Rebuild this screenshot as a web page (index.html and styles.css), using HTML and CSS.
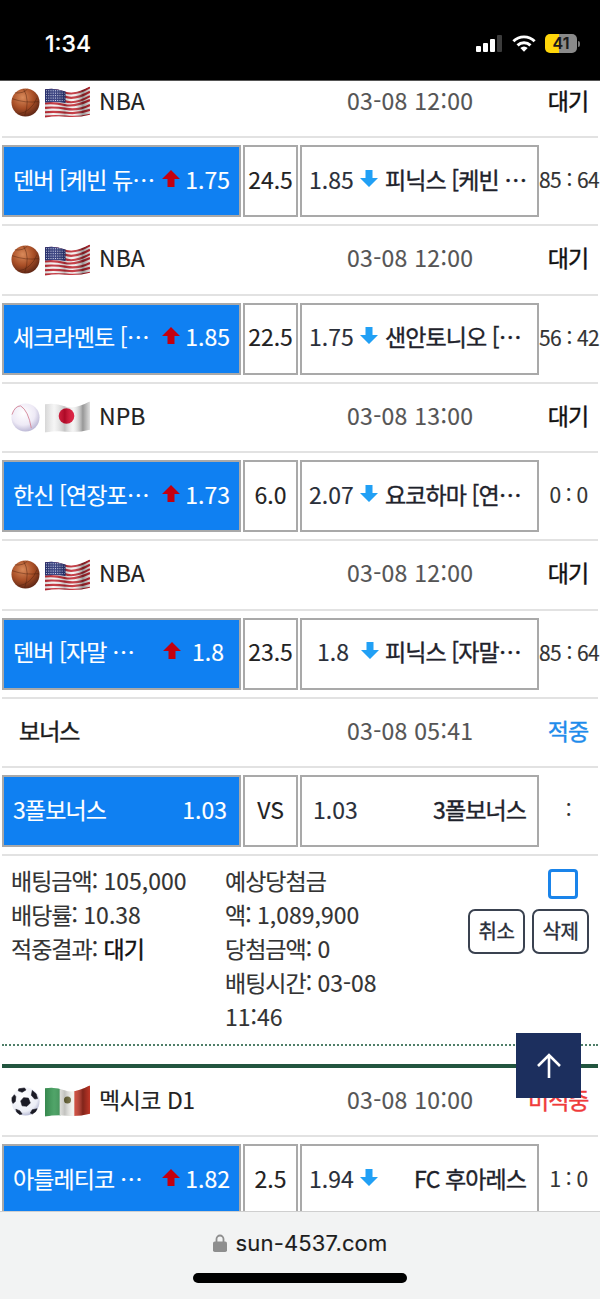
FILE: index.html
```html
<!DOCTYPE html>
<html lang="ko">
<head>
    <meta charset="UTF-8">
    <meta name="viewport" content="width=device-width, initial-scale=1.0">
    <title>sun-4537.com</title>
    <link rel="stylesheet" href="styles.css">
</head>
<body>
    <!-- shared icons -->
    <svg class="svg-defs" aria-hidden="true">
        <defs>
            <radialGradient id="grad-basket" cx="40%" cy="32%" r="72%">
                <stop offset="0" stop-color="#d98a5a"/>
                <stop offset="0.55" stop-color="#a84e26"/>
                <stop offset="1" stop-color="#5a2414"/>
            </radialGradient>
            <radialGradient id="grad-base" cx="42%" cy="35%" r="70%">
                <stop offset="0" stop-color="#ffffff"/>
                <stop offset="0.6" stop-color="#eeeaf6"/>
                <stop offset="1" stop-color="#b4b0d0"/>
            </radialGradient>
            <radialGradient id="grad-soccer" cx="42%" cy="35%" r="72%">
                <stop offset="0" stop-color="#ffffff"/>
                <stop offset="0.7" stop-color="#eceef6"/>
                <stop offset="1" stop-color="#a4a8c8"/>
            </radialGradient>
            <linearGradient id="grad-fold">
                <stop offset="0" stop-color="#000" stop-opacity="0.12"/>
                <stop offset="0.2" stop-color="#fff" stop-opacity="0.1"/>
                <stop offset="0.44" stop-color="#000" stop-opacity="0.2"/>
                <stop offset="0.62" stop-color="#fff" stop-opacity="0.1"/>
                <stop offset="0.84" stop-color="#000" stop-opacity="0.38"/>
                <stop offset="1" stop-color="#000" stop-opacity="0.08"/>
            </linearGradient>
            <clipPath id="flag-wave">
                <path d="M0 3q10-2 20 2t26-5v29q-12 3-24 2t-22 1z"/>
            </clipPath>
            <symbol id="ball-basket" viewBox="0 0 30 30">
                <circle cx="15" cy="15" r="14.5" fill="url(#grad-basket)"/>
                <path d="M1 11q14 5 28 3M13 1q7 12 1 28M4 5q9 1 13-4M7 27q14-2 20-17" fill="none" stroke="#4a1d0c" stroke-width="0.6" stroke-opacity="0.75"/>
            </symbol>
            <symbol id="ball-base" viewBox="0 0 30 30">
                <circle cx="15" cy="15" r="14.5" fill="url(#grad-base)"/>
                <path d="M1 12Q4 3 10 3Q18 8 21 26" fill="none" stroke="#d68c9e" stroke-width="1"/>
            </symbol>
            <symbol id="ball-soccer" viewBox="0 0 30 30">
                <circle cx="15" cy="15" r="14.5" fill="url(#grad-soccer)"/>
                <path d="M13 11l5 .5 2 5-3.500 3.500-5-.5-1.500-5zM8 1.800l6-.8 1.500 2-4 2.500-4-1.500zM22 3.500l4 3.500 1.500 5-3 .5-3.500-4zM1 11l2.500-3 1.500 2-.5 5-2.500 2-1-2.500zM5 23l4 1.500 2.500 3.500-2.500.5-3-2.500zM20 27l2-3.500 5-1-1.500 3-3.500 2.500z" fill="#1a1a24" stroke="#1a1a24" stroke-width="0.6" stroke-linejoin="round"/>
            </symbol>
            <symbol id="flag-us" viewBox="0 0 46 32">
                <g clip-path="url(#flag-wave)">
                    <rect width="46" height="32" fill="#f6f3f3"/>
                    <path d="M0 4q10-2 20 2t26-5M0 8.500q10-2 20 2t26-5M0 13q10-2 20 2t26-5M0 17.500q10-1 20 1.500t26-5M0 22q10-1 22 1t24-4M0 26.500q10-1 22 .5t24-3M0 31q10-1 22 0t24-2" fill="none" stroke="#c22a34" stroke-width="2.200"/>
                    <path d="M0 0h21v17q-10-1.500-21-.5z" fill="#2a3478"/>
                    <path d="M1 4.500h19M1 7h19M1 9.500h19M1 12h19M1 14.500h19" stroke="#dfe2f4" stroke-width="1" stroke-dasharray="1 1.300"/>
                    <rect width="46" height="32" fill="url(#grad-fold)"/>
                </g>
            </symbol>
            <symbol id="flag-jp" viewBox="0 0 46 32">
                <g clip-path="url(#flag-wave)">
                    <rect width="46" height="32" fill="#f4f4f4"/>
                    <circle cx="22" cy="15" r="8" fill="#d80c30"/>
                    <rect width="46" height="32" fill="url(#grad-fold)"/>
                </g>
            </symbol>
            <symbol id="flag-mx" viewBox="0 0 46 32">
                <g clip-path="url(#flag-wave)">
                    <rect width="16" height="32" fill="#3d9a58"/>
                    <rect x="15" width="16" height="32" fill="#f2f2ee"/>
                    <rect x="30" width="16" height="32" fill="#cf3a2a"/>
                    <circle cx="23" cy="15" r="3.600" fill="#6e6a3a"/>
                    <rect width="46" height="32" fill="url(#grad-fold)"/>
                </g>
            </symbol>
            <symbol id="arrow-up" viewBox="0 0 18 18">
                <path d="M9 0l9 9h-5.500v8h-7v-8h-5.500z"/>
            </symbol>
            <symbol id="arrow-down" viewBox="0 0 18 18">
                <path d="M5.500 0h7v8h5.500l-9 9-9-9h5.500z"/>
            </symbol>
        </defs>
    </svg>

    <div class="status-bar">
        <span class="clock">1:34</span>
        <div class="status-icons">
            <svg class="signal" viewBox="0 0 27 17" fill="#fff">
                <rect x="0" y="11" width="5" height="6" rx="1"/>
                <rect x="7" y="8" width="5" height="9" rx="1"/>
                <rect x="14" y="4" width="5" height="13" rx="1"/>
                <rect x="21" y="0" width="5" height="17" rx="1" fill="#3c3c3c"/>
            </svg>
            <svg class="wifi" viewBox="0 0 26 18" fill="none" stroke="#fff" stroke-width="3.200">
                <path d="M1.500 6.500a16.500 16.500 0 0 1 23 0"/>
                <path d="M6 11a10 10 0 0 1 14 0"/>
                <path d="M13 18l-4-4a5.500 5.500 0 0 1 8 0z" fill="#fff" stroke="none"/>
            </svg>
            <div class="battery"><span class="battery-level">41</span></div>
            <span class="battery-nub"></span>
        </div>
    </div>

    <div class="page">
        <div class="bet-list">
            <div class="game-head">
                <div class="league">
                    <svg class="ball"><use href="#ball-basket"/></svg>
                    <svg class="flag"><use href="#flag-us"/></svg>
                    <span>NBA</span>
                </div>
                <div class="game-time">03-08 12:00</div>
                <div class="game-state">대기</div>
            </div>
            <div class="bet-row">
                <div class="cell team home selected">
                    <span class="team-name">덴버 [케빈 듀⋯</span>
                    <span class="odds"><svg class="arrow up"><use href="#arrow-up"/></svg>1.75</span>
                </div>
                <div class="cell line">24.5</div>
                <div class="cell team away">
                    <span class="odds"><span>1.85</span><svg class="arrow down"><use href="#arrow-down"/></svg></span>
                    <span class="team-name cut">피닉스 [케빈 ⋯</span>
                </div>
                <div class="score">85 : 64</div>
            </div>

            <div class="game-head">
                <div class="league">
                    <svg class="ball"><use href="#ball-basket"/></svg>
                    <svg class="flag"><use href="#flag-us"/></svg>
                    <span>NBA</span>
                </div>
                <div class="game-time">03-08 12:00</div>
                <div class="game-state">대기</div>
            </div>
            <div class="bet-row">
                <div class="cell team home selected">
                    <span class="team-name">세크라멘토 [⋯</span>
                    <span class="odds"><svg class="arrow up"><use href="#arrow-up"/></svg>1.85</span>
                </div>
                <div class="cell line">22.5</div>
                <div class="cell team away">
                    <span class="odds"><span>1.75</span><svg class="arrow down"><use href="#arrow-down"/></svg></span>
                    <span class="team-name cut">샌안토니오 [⋯</span>
                </div>
                <div class="score">56 : 42</div>
            </div>

            <div class="game-head">
                <div class="league">
                    <svg class="ball"><use href="#ball-base"/></svg>
                    <svg class="flag"><use href="#flag-jp"/></svg>
                    <span>NPB</span>
                </div>
                <div class="game-time">03-08 13:00</div>
                <div class="game-state">대기</div>
            </div>
            <div class="bet-row">
                <div class="cell team home selected">
                    <span class="team-name">한신 [연장포⋯</span>
                    <span class="odds"><svg class="arrow up"><use href="#arrow-up"/></svg>1.73</span>
                </div>
                <div class="cell line">6.0</div>
                <div class="cell team away">
                    <span class="odds"><span>2.07</span><svg class="arrow down"><use href="#arrow-down"/></svg></span>
                    <span class="team-name cut">요코하마 [연⋯</span>
                </div>
                <div class="score">0 : 0</div>
            </div>

            <div class="game-head">
                <div class="league">
                    <svg class="ball"><use href="#ball-basket"/></svg>
                    <svg class="flag"><use href="#flag-us"/></svg>
                    <span>NBA</span>
                </div>
                <div class="game-time">03-08 12:00</div>
                <div class="game-state">대기</div>
            </div>
            <div class="bet-row">
                <div class="cell team home selected">
                    <span class="team-name">덴버 [자말 ⋯</span>
                    <span class="odds"><svg class="arrow up"><use href="#arrow-up"/></svg><span class="odds-short">1.8</span></span>
                </div>
                <div class="cell line">23.5</div>
                <div class="cell team away">
                    <span class="odds"><span class="odds-short">1.8</span><svg class="arrow down"><use href="#arrow-down"/></svg></span>
                    <span class="team-name cut">피닉스 [자말⋯</span>
                </div>
                <div class="score">85 : 64</div>
            </div>

            <div class="game-head">
                <div class="league bonus"><span>보너스</span></div>
                <div class="game-time">03-08 05:41</div>
                <div class="game-state hit">적중</div>
            </div>
            <div class="bet-row">
                <div class="cell team home selected plain">
                    <span class="team-name">3폴보너스</span>
                    <span class="odds">1.03</span>
                </div>
                <div class="cell line">VS</div>
                <div class="cell team away plain">
                    <span class="odds">1.03</span>
                    <span class="team-name">3폴보너스</span>
                </div>
                <div class="score">:</div>
            </div>

            <div class="slip-info">
                <div class="slip-col amounts">
                    <div><span class="label">배팅금액:</span> 105,000</div>
                    <div><span class="label">배당률:</span> 10.38</div>
                    <div><span class="label">적중결과:</span> <b>대기</b></div>
                </div>
                <div class="slip-col payout">
                    <div class="label">예상당첨금</div>
                    <div><span class="label">액:</span> 1,089,900</div>
                    <div><span class="label">당첨금액:</span> 0</div>
                    <div><span class="label">배팅시간:</span> 03-08</div>
                    <div>11:46</div>
                </div>
                <div class="slip-actions">
                    <span class="check-box"></span>
                    <div class="slip-buttons">
                        <button class="slip-btn">취소</button>
                        <button class="slip-btn">삭제</button>
                    </div>
                </div>
            </div>
            <div class="slip-end"></div>

            <div class="game-head">
                <div class="league">
                    <svg class="ball"><use href="#ball-soccer"/></svg>
                    <svg class="flag"><use href="#flag-mx"/></svg>
                    <span class="league-ko">멕시코 D1</span>
                </div>
                <div class="game-time">03-08 10:00</div>
                <div class="game-state miss">미적중</div>
            </div>
            <div class="bet-row">
                <div class="cell team home selected">
                    <span class="team-name">아틀레티코 ⋯</span>
                    <span class="odds"><svg class="arrow up"><use href="#arrow-up"/></svg>1.82</span>
                </div>
                <div class="cell line">2.5</div>
                <div class="cell team away">
                    <span class="odds"><span>1.94</span><svg class="arrow down"><use href="#arrow-down"/></svg></span>
                    <span class="team-name">FC 후아레스</span>
                </div>
                <div class="score">1 : 0</div>
            </div>
        </div>

        <button class="to-top" aria-label="top">
            <svg viewBox="0 0 26 26" fill="none" stroke="#fff" stroke-width="2.600">
                <path d="M13 25V2M2 13L13 2l11 11"/>
            </svg>
        </button>
    </div>

    <div class="browser-bar">
        <div class="address">
            <svg class="lock" viewBox="0 0 14 18">
                <path d="M3.500 8V5a3.500 3.500 0 0 1 7 0v3" fill="none" stroke="#8e8e8e" stroke-width="1.800"/>
                <rect y="7.500" width="14" height="10.500" rx="1.800" fill="#8e8e8e"/>
            </svg>
            <span>sun-4537.com</span>
        </div>
        <div class="home-indicator"></div>
    </div>
</body>
</html>
```
FILE: styles.css
```css
* {
    box-sizing: border-box;
}

html,
body {
    margin: 0;
    height: 1299px;
    overflow: hidden;
}

body {
    display: flex;
    flex-direction: column;
    background-color: #fff;
    font-family: "Noto Sans CJK KR", "Noto Sans", sans-serif;
    font-size: 23px;
    color: #222;
    -webkit-text-stroke: 0.15px;
}

.svg-defs {
    position: absolute;
    width: 0;
    height: 0;
}

/* status bar */
.status-bar {
    flex: none;
    height: 81px;
    display: flex;
    align-items: center;
    justify-content: space-between;
    padding: 7px 20px 0 45px;
    background-color: #000;
    border-bottom: 1px solid #555;
}

.clock {
    font-family: Inter, sans-serif;
    font-size: 23px;
    font-weight: 500;
    color: #fff;
}

.status-icons {
    display: flex;
    align-items: center;
}

.signal {
    width: 27px;
    height: 17px;
    margin-right: 9px;
}

.wifi {
    width: 24px;
    height: 17px;
    margin-right: 9px;
}

.battery {
    width: 32px;
    height: 19px;
    border-radius: 5px;
    background: linear-gradient(90deg, #ffd60a 44%, #8a8a8a 44%);
    text-align: center;
}

.battery-level {
    display: block;
    font-family: Inter, sans-serif;
    font-size: 16px;
    font-weight: 600;
    line-height: 19px;
    color: #1a1a1a;
}

.battery-nub {
    width: 2px;
    height: 6px;
    margin-left: 1px;
    border-radius: 0 2px 2px 0;
    background-color: #777;
}

/* bet list */
.page {
    flex: 1;
    position: relative;
    overflow: hidden;
}

.bet-list {
    margin-top: -12.5px;
    padding: 0 0 0 2px;
}

.game-head {
    display: flex;
    align-items: center;
    height: 69.5px;
    margin-right: 2px;
    border-bottom: 2px solid #e2e2e2;
}

.league {
    flex: none;
    width: 345px;
    display: flex;
    align-items: center;
    padding-left: 9px;
    color: #222;
}

.league span,
.game-time,
.game-state {
    padding-bottom: 5px;
}

.league.bonus {
    padding-left: 17px;
    letter-spacing: -1px;
    color: #1c1c1c;
    -webkit-text-stroke: 0.4px;
}

.league-ko {
    letter-spacing: -0.5px;
}

.ball {
    width: 29px;
    height: 29px;
    flex: none;
    margin-right: 5px;
}

.flag {
    width: 45px;
    height: 32px;
    flex: none;
    margin-right: 9px;
}

.game-time {
    flex: 1;
    letter-spacing: 0.3px;
    color: #555;
}

.game-state {
    flex: none;
    width: 48px;
    margin-right: 6px;
    text-align: center;
    letter-spacing: -1px;
    color: #111;
    white-space: nowrap;
    -webkit-text-stroke: 0.4px;
}

.game-state.hit {
    color: #1f8ceb;
}

.game-state.miss {
    width: 60px;
    margin-right: 10px;
    color: #ef3b3b;
}

.bet-row {
    display: flex;
    align-items: stretch;
    gap: 2px;
    height: 88px;
    margin-right: 2px;
    padding: 7px 0;
    border-bottom: 2px solid #e2e2e2;
}

.cell {
    flex: none;
    display: flex;
    align-items: center;
    padding-bottom: 5px;
    border: 2px solid #a9a9a9;
    background-color: #fff;
    white-space: nowrap;
}

.team {
    width: 239px;
    justify-content: space-between;
    padding-left: 9px;
    padding-right: 9px;
    color: #2a2f3a;
}

.team-name {
    letter-spacing: -0.9px;
}

.team.selected {
    background-color: #0f80f2;
    color: #fff;
}

.line {
    width: 55px;
    justify-content: center;
}

.odds {
    display: flex;
    align-items: center;
}

.odds-short {
    padding: 0 6px;
}

.away {
    padding-left: 7px;
    padding-right: 11px;
}

.away .odds-short {
    padding-left: 8px;
}

.away .team-name {
    color: #1e222b;
    -webkit-text-stroke: 0.4px;
}

.team-name.cut {
    width: 141px;
}

.away.plain {
    padding-left: 11px;
}

.home.plain {
    padding-right: 12px;
}

.arrow {
    width: 18px;
    height: 18px;
    flex: none;
}

.arrow.up {
    margin-right: 5px;
    fill: #c4000f;
}

.arrow.down {
    margin-left: 6px;
    fill: #21a0f5;
}

.score {
    flex: 1;
    display: flex;
    align-items: center;
    justify-content: center;
    margin-left: -2px;
    padding-bottom: 4px;
    font-size: 21px;
    letter-spacing: -0.6px;
    white-space: nowrap;
    color: #333;
}

/* slip summary */
.slip-info {
    display: flex;
    height: 190.5px;
    margin-right: 2px;
    padding: 7px 9px 0 9px;
    line-height: 34px;
    color: #333;
}

.label {
    letter-spacing: -1px;
}

.slip-col b {
    font-weight: 400;
    letter-spacing: -1px;
    color: #111;
    -webkit-text-stroke: 0.4px;
}

.amounts {
    flex: none;
    width: 214px;
}

.payout {
    flex: none;
    width: 168px;
}

.slip-actions {
    flex: 1;
    display: flex;
    flex-direction: column;
    align-items: flex-end;
    gap: 10px;
    padding-top: 6px;
}

.check-box {
    width: 30px;
    height: 30px;
    margin-right: 11px;
    border: 3px solid #1a84ea;
    border-radius: 4px;
}

.slip-buttons {
    display: flex;
    gap: 7px;
}

.slip-btn {
    width: 57px;
    height: 45px;
    padding: 0 0 3px;
    border: 2px solid #3a4250;
    border-radius: 7px;
    background-color: #fff;
    font: 400 20px "Noto Sans CJK KR", sans-serif;
    letter-spacing: -0.5px;
    color: #2a2f3a;
    -webkit-text-stroke: 0.4px;
}

.slip-end {
    height: 24px;
    margin-top: -3px;
    margin-right: 2px;
    border-top: 2px dotted #4f7f68;
    border-bottom: 4px solid #22553f;
}

.to-top {
    position: absolute;
    top: 952px;
    left: 516px;
    width: 65px;
    height: 65px;
    display: flex;
    align-items: center;
    justify-content: center;
    padding: 0;
    border: none;
    background-color: #1c2f5e;
}

.to-top svg {
    width: 26px;
    height: 26px;
}

/* browser bottom bar */
.browser-bar {
    flex: none;
    height: 88px;
    display: flex;
    flex-direction: column;
    align-items: center;
    border-top: 1px solid #cfcfcf;
    background-color: #f2f3f3;
}

.address {
    display: flex;
    align-items: center;
    gap: 9px;
    height: 61px;
    font-family: Inter, sans-serif;
    font-size: 22px;
    letter-spacing: 0.15px;
    color: #1d1d1d;
}

.lock {
    width: 14px;
    height: 18px;
}

.home-indicator {
    width: 214px;
    height: 10px;
    border-radius: 5px;
    background-color: #000;
}
```
